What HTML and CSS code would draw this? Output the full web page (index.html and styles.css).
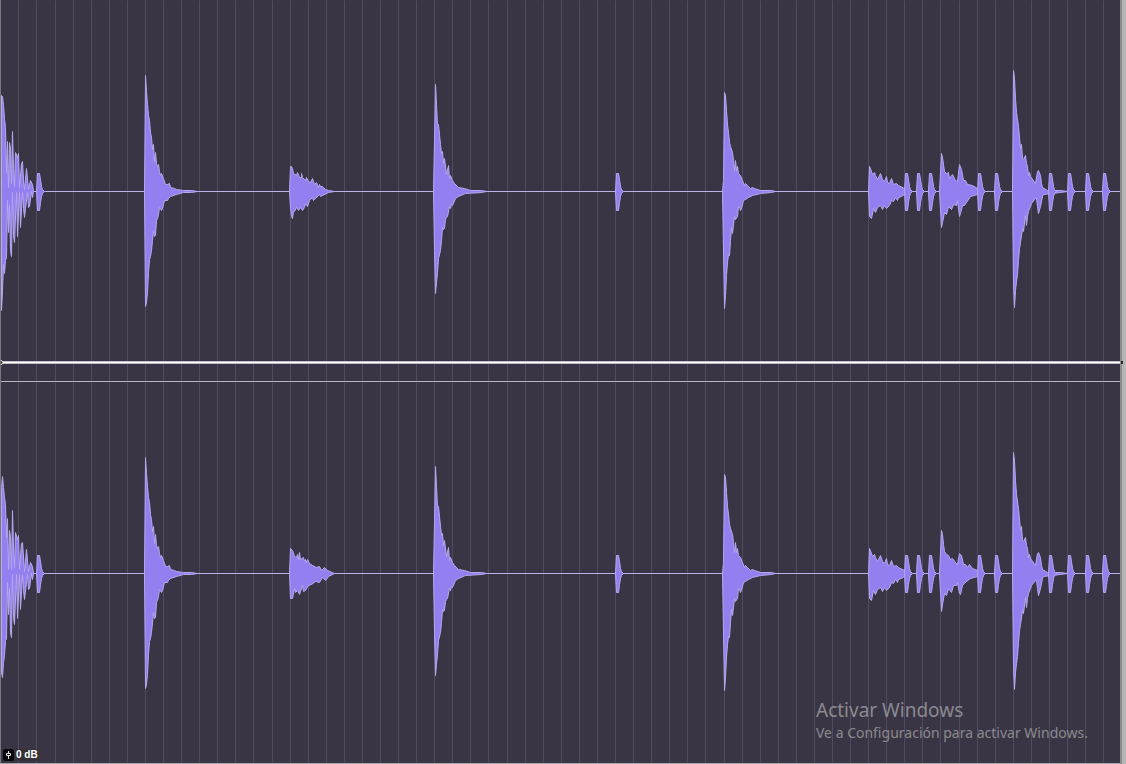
FILE: index.html
```html
<!DOCTYPE html>
<html lang="es">
<head>
<meta charset="utf-8">
<title>Editor de audio</title>
<link rel="stylesheet" href="styles.css">
</head>
<body>
<main class="editor">
  <section class="clip" aria-label="Forma de onda estéreo">
    <svg class="channel channel-left" viewBox="0 0 1119 382" preserveAspectRatio="none" role="img" aria-label="Canal izquierdo">
      <defs>
        <path id="grid" d="M17 0V382M35 0V382M54 0V382M72 0V382M90 0V382M108 0V382M126 0V382M144 0V382M162 0V382M180 0V382M198 0V382M216 0V382M234 0V382M252 0V382M271 0V382M289 0V382M307 0V382M325 0V382M343 0V382M361 0V382M379 0V382M397 0V382M415 0V382M433 0V382M451 0V382M469 0V382M487 0V382M506 0V382M524 0V382M542 0V382M560 0V382M578 0V382M596 0V382M614 0V382M632 0V382M650 0V382M668 0V382M686 0V382M704 0V382M723 0V382M741 0V382M759 0V382M777 0V382M795 0V382M813 0V382M831 0V382M849 0V382M867 0V382M885 0V382M903 0V382M921 0V382M939 0V382M958 0V382M976 0V382M994 0V382M1012 0V382M1030 0V382M1048 0V382M1066 0V382M1084 0V382M1102 0V382"/>
        <path id="hit" d="M-1 191L0 173 2 173 3 179 4 186 5 189 7 191 5 193 4 196 3 202 2 210 0 210Z"/>
        <g id="hits">
          <use href="#hit" x="37"/><use href="#hit" x="616"/><use href="#hit" x="905"/><use href="#hit" x="917"/><use href="#hit" x="929"/><use href="#hit" x="978"/><use href="#hit" x="995"/><use href="#hit" x="1049"/><use href="#hit" x="1068"/><use href="#hit" x="1086"/><use href="#hit" x="1103"/>
        </g>
        <g id="beats">
          <path d="M144 191L145 75 146 91 147 104 148 115 149 120 150 132 151 137 152 149 153 144 154 161 155 152 156 163 157 166 158 164 159 171 160 175 161 173 163 178 165 184 167 184 169 183 170 187 174 188 176 189 183 190 191 190 197 191 191 192 183 192 176 194 170 196 168 198 167 200 164 200 162 208 161 210 159 207 158 214 157 218 156 220 155 235 154 236 153 230 152 240 151 250 150 256 149 259 148 272 147 292 146 302 145 306Z"/>
          <path d="M433 191L434 140 435 84 436 104 437 124 438 124 439 134 440 144 441 153 442 151 443 163 444 158 446 174 448 165 449 178 450 175 452 180 454 183 458 187 464 188 470 190 481 190 486 191 481 192 465 193 458 196 455 198 452 205 451 204 450 208 449 206 447 216 446 217 445 219 444 228 443 229 442 227 441 240 440 250 438 258 437 272 436 282 435 293 434 250Z"/>
          <path d="M722 191L723 180 724 92 725 95 726 110 727 124 728 132 729 142 730 146 732 152 733 160 734 170 735 160 736 170 737 166 738 173 740 175 742 180 744 185 745 183 747 185 750 188 752 187 754 188 760 190 771 190 775 191 771 192 760 193 752 195 748 197 745 199 743 200 741 208 740 210 739 206 738 206 737 216 735 219 734 216 732 233 731 227 730 240 729 255 728 254 727 262 726 275 725 295 724 308Z"/>
          <path d="M868 191L869 166 870 168 872 174 874 172 875 175 877 179 880 173 882 179 884 181 886 176 887 182 889 183 891 178 893 184 896 183 898 185 904 188 908 191 904 194 901 196 898 197 897 200 895 197 893 201 891 200 889 205 886 208 884 205 882 209 880 205 877 207 875 212 873 208 871 218 869 216Z"/>
          <path d="M1012 191L1013 70 1014 78 1015 98 1016 112 1018 126 1020 148 1021 144 1022 158 1023 159 1025 155 1026 163 1027 166 1028 175 1029 172 1030 176 1035 183 1037 171 1038 170 1040 175 1041 183 1042 187 1047 190 1060 190 1067 191 1060 192 1043 194 1042 196 1040 206 1038 213 1037 206 1036 198 1035 198 1031 203 1028 211 1027 216 1026 225 1025 215 1023 231 1022 228 1020 242 1019 248 1018 260 1017 274 1016 281 1015 290 1014 307 1013 285Z"/>
        </g>
      </defs>
      <g class="axis">
        <use class="grid" href="#grid"/>
        <path class="zero" d="M0 191H1119"/>
      </g>
      <g class="wave">
        <path d="M1 191L1 95 2 96 3 105 4 118 5 127 6 172 7 141 8 187 9 142 10 148 11 183 12 131 13 168 14 186 15 152 17 157 18 153 19 187 21 163 22 161 23 180 24 189 26 168 28 189 30 180 32 184 33 191 32 197 31 191 29 206 28 207 27 192 25 208 24 217 23 208 22 192 20 227 19 192 17 236 16 192 14 242 13 235 12 192 11 256 10 250 9 205 8 232 7 200 6 257 5 260 4 273 3 264 2 290 1 310Z"/>
        <path d="M289 191L290 166 291 166 292 168 293 173 296 175 297 172 299 177 301 177 301 173 302 177 305 180 306 177 308 181 310 182 312 178 314 184 316 182 318 187 319 184 320 186 322 186 325 189 328 190 334 191 328 192 322 195 320 196 319 194 315 198 313 200 312 197 310 199 309 200 307 206 305 203 304 207 302 210 300 207 298 210 296 207 294 211 293 211 292 218 291 216 290 208Z"/>
        <path d="M939 191L941 153 942 157 943 164 944 171 946 173 948 172 949 178 952 174 955 180 957 181 959 164 961 169 963 180 965 180 967 184 972 185 977 188 984 191 977 194 970 196 966 202 964 205 962 205 960 213 959 216 957 200 956 205 953 204 951 209 948 206 946 214 944 212 942 222 941 227Z"/>
        <use href="#beats"/>
        <use href="#hits"/>
      </g>
      <path class="envelope-edge" d="M0 361H1119V364H0Z"/>
      <path class="envelope" d="M0 362H1119V363H0Z"/>
      <path class="handle" d="M0 360L2 362.500 0 365"/>
      <path class="separator" d="M0 381H1119V382H0Z"/>
    </svg>
    <svg class="channel channel-right" viewBox="0 0 1119 381" preserveAspectRatio="none" role="img" aria-label="Canal derecho">
      <g class="axis">
        <use class="grid" href="#grid"/>
        <path class="zero" d="M0 191H1119"/>
      </g>
      <g class="wave">
        <path d="M1 191L1 105 2 94 3 105 4 115 5 122 6 155 7 136 8 187 9 148 10 154 11 187 12 128 13 165 14 185 15 150 17 157 18 153 19 187 21 161 22 160 24 189 26 167 28 189 30 180 32 184 33 191 32 197 31 191 29 206 28 207 27 192 24 217 23 208 22 192 20 227 19 192 17 236 16 192 14 242 13 235 12 192 11 255 10 250 9 206 8 232 7 200 6 257 5 258 4 273 3 280 2 295 1 290Z"/>
        <path d="M289 191L290 166 292 168 294 174 296 175 297 172 298 177 299 170 300 177 303 175 304 179 305 177 306 180 307 177 309 181 312 183 316 185 319 184 321 188 324 185 327 188 334 191 328 194 325 198 322 195 319 200 315 199 311 202 308 203 305 208 303 209 302 203 299 212 297 208 295 210 294 206 292 216 290 216Z"/>
        <path d="M939 191L941 148 942 152 943 162 944 169 946 172 948 173 950 177 952 176 955 180 957 182 959 171 961 173 963 182 965 182 967 185 969 182 972 186 977 188 984 191 977 194 970 196 966 199 964 201 962 203 960 212 959 211 957 200 956 203 953 203 951 210 948 206 946 213 944 211 942 222 941 229Z"/>
        <use href="#beats"/>
        <use href="#hits"/>
      </g>
    </svg>
    <div class="gain">
      <svg class="gain-icon" viewBox="0 0 11 12" aria-hidden="true"><path d="M5.500 2V5M5.500 7V10M3.500 4.500H7.500V6.500H3.500Z"/></svg>
      <span class="gain-value">0 dB</span>
    </div>
    <aside class="notice">
      <p class="notice-title">Activar Windows</p>
      <p class="notice-text">Ve a Configuración para activar Windows.</p>
    </aside>
  </section>
  <div class="edge"><span class="edge-handle"></span></div>
</main>
</body>
</html>
```
FILE: styles.css
```css
* { box-sizing: border-box; }

body {
  margin: 0;
  background: #3a3545;
}

.editor {
  display: flex;
  height: 100vh;
  overflow: hidden;
}

.clip {
  position: relative;
  display: flex;
  flex: 1;
  flex-direction: column;
  min-width: 0;
  border-left: 1px solid #78777a;
  border-bottom: 1px solid #a9a7ae;
}

.channel {
  display: block;
  width: 100%;
  height: 50vh;
  flex: none;
}

.channel-right {
  flex: 1;
  min-height: 0;
}

.axis,
.wave {
  fill: none;
  stroke-width: 1px;
}

.axis { transform: translate(0.5px, 0.5px); }

.wave {
  transform: translate(-0.5px, 0.5px);
  fill: #937ff0;
  stroke: #b8a9ef;
  stroke-linejoin: bevel;
}

.grid { stroke: #504b60; }
.zero { stroke: #bdb2e8; }
.envelope-edge { fill: #c3bfca; }
.envelope { fill: #fff; }
.separator { fill: #b9b6bf; }

.handle {
  fill: #111;
  stroke: #fff;
  stroke-width: 1px;
}

.gain {
  position: absolute;
  left: 2px;
  bottom: 2px;
  display: flex;
  align-items: center;
  color: #fff;
  font: bold 10px/12px "Liberation Sans", Arial, sans-serif;
}

.gain-icon {
  width: 11px;
  height: 12px;
  border-radius: 2px;
  background: #08080c;
  fill: none;
  stroke: #e5e5e5;
}

.gain-value {
  padding: 0 1px 0 2px;
  background: #353338;
}

.notice {
  position: absolute;
  right: 28px;
  bottom: 20px;
  width: 276px;
  color: #8b8a8f;
  font-family: "Noto Sans", "Segoe UI", sans-serif;
  white-space: nowrap;
}

.notice p { margin: 0; }

.notice-title {
  font-size: 19px;
  line-height: 26px;
}

.notice-text {
  font-size: 14px;
  line-height: 20px;
}

.edge {
  display: flex;
  align-items: center;
  width: 6px;
  padding-bottom: 40px;
  border-left: 2px solid #8b8a8d;
  background: #b5b5b5;
}

.edge-handle {
  width: 2px;
  height: 3px;
  margin-left: -1px;
  background: #29272e;
}
```
